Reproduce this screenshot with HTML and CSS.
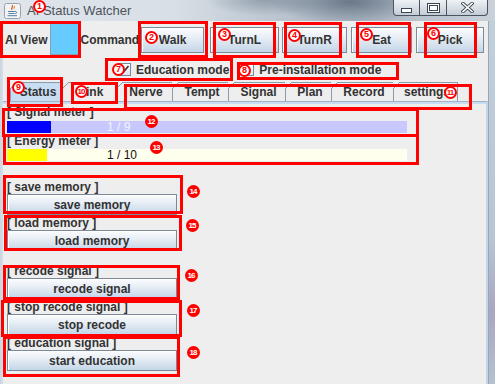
FILE: index.html
```html
<!DOCTYPE html>
<html>
<head>
<meta charset="utf-8">
<title>AI Status Watcher</title>
<link rel="stylesheet" href="styles.css">
</head>
<body>
<div class="window">
  <div class="titlebar">
    <svg class="app-icon" viewBox="0 0 17 16" width="17" height="16">
      <rect x="0.5" y="0.5" width="16" height="15" rx="2" fill="#f1f3f5" stroke="#9aa3ad"/>
      <path d="M8 2.2c2.2 1.6-1.6 2.6 0 4.6" stroke="#e0601a" stroke-width="1.3" fill="none"/>
      <path d="M10.2 3.2c1 1-1 1.6 0 2.6" stroke="#e0601a" stroke-width="1" fill="none"/>
      <path d="M4 8.5h7M4.5 10.5h6M3.5 12.7h9.5" stroke="#557ea3" stroke-width="1" fill="none"/>
      <path d="M11 8.3c2.2 0 2.2 2.3 0 2.3" stroke="#557ea3" stroke-width="1" fill="none"/>
    </svg>
    <span class="title">AI Status Watcher</span>
    <div class="winbtns">
      <div class="wb wb-min"><span class="g-min"></span></div>
      <div class="wb wb-max"><span class="g-max"></span></div>
      <div class="wb wb-close">
        <svg width="13" height="11" viewBox="0 0 13 11"><path d="M2 1.5l9 8M11 1.5l-9 8" stroke="#3c4652" stroke-width="3.4" stroke-linecap="square"/><path d="M2 1.5l9 8M11 1.5l-9 8" stroke="#ffffff" stroke-width="1.6" stroke-linecap="square"/></svg>
      </div>
    </div>
  </div>
  <div class="body">
    <div class="frame-left"></div>
    <div class="content">
      <div class="toolbar">
        <span class="lbl">AI View</span>
        <div class="view"></div>
        <span class="lbl cmd">Command</span>
        <button class="btn c-walk">Walk</button>
        <button class="btn c-turnl">TurnL</button>
        <button class="btn c-turnr">TurnR</button>
        <button class="btn c-eat">Eat</button>
        <button class="btn c-pick">Pick</button>
      </div>
      <div class="modes">
        <label class="chk"><span class="cb"><svg width="11" height="11" viewBox="0 0 11 11"><path d="M2 5.5l2.5 2.5L9.5 2" stroke="#333" stroke-width="1.6" fill="none"/></svg></span>Education mode</label>
        <label class="chk chk2"><span class="cb"></span>Pre-installation mode</label>
      </div>
      <div class="tabs">
        <div class="tab sel t-status">Status</div>
        <div class="tab t-link">Link</div>
        <div class="tab t-nerve">Nerve</div>
        <div class="tab t-tempt">Tempt</div>
        <div class="tab t-signal">Signal</div>
        <div class="tab t-plan">Plan</div>
        <div class="tab t-record">Record</div>
        <div class="tab t-settings">settings</div>
      </div>
      <div class="panel">
        <div class="meter">
          <div class="mlabel">[ Signal meter ]</div>
          <div class="bar bar-signal"><div class="fill fill-signal"></div><span class="btext light">1 / 9</span></div>
        </div>
        <div class="meter">
          <div class="mlabel">[ Energy meter ]</div>
          <div class="bar bar-energy"><div class="fill fill-energy"></div><span class="btext">1 / 10</span></div>
        </div>
        <div class="groups first">
          <div class="grp"><div class="glabel">[ save memory ]</div><button class="btn wide">save memory</button></div>
          <div class="grp"><div class="glabel">[ load memory ]</div><button class="btn wide">load memory</button></div>
        </div>
        <div class="groups second">
          <div class="grp"><div class="glabel">[ recode signal ]</div><button class="btn wide">recode signal</button></div>
          <div class="grp"><div class="glabel">[ stop recode signal ]</div><button class="btn wide">stop recode</button></div>
          <div class="grp"><div class="glabel">[ education signal ]</div><button class="btn wide">start education</button></div>
        </div>
      </div>
    </div>
    <div class="frame-right"></div>
  </div>

  <div class="notes">
    <div class="rb r1"></div><div class="rb r2"></div><div class="rb r3"></div>
    <div class="rb r4"></div><div class="rb r5"></div><div class="rb r6"></div>
    <div class="rb r7"></div><div class="rb r8"></div><div class="rb r9"></div>
    <div class="rb r10"></div><div class="rb r11"></div><div class="rb r12"></div>
    <div class="rb r13"></div><div class="rb r14"></div><div class="rb r15"></div>
    <div class="rb r16"></div><div class="rb r17"></div><div class="rb r18"></div>

    <span class="num n1">1</span><span class="num n2">2</span><span class="num n3">3</span>
    <span class="num n4">4</span><span class="num n5">5</span><span class="num n6">6</span>
    <span class="num n7">7</span><span class="num n8">8</span><span class="num n9">9</span>
    <span class="num two n10">10</span><span class="num two n11">11</span>
    <span class="num two fill n12">12</span><span class="num two fill n13">13</span>
    <span class="num two fill n14">14</span><span class="num two fill n15">15</span>
    <span class="num two fill n16">16</span><span class="num two fill n17">17</span>
    <span class="num two fill n18">18</span>
  </div>
</div>
</body>
</html>
```

FILE: styles.css
```css
* { box-sizing: border-box; }
html, body { margin: 0; padding: 0; }
body {
  width: 495px;
  height: 384px;
  overflow: hidden;
  font-family: "Liberation Sans", Arial, sans-serif;
  background: #eeeeee;
}
.window {
  position: relative;
  width: 495px;
  height: 384px;
  display: flex;
  flex-direction: column;
  background: #eeeeee;
}

/* title bar */
.titlebar {
  flex: none;
  height: 21px;
  display: flex;
  align-items: flex-start;
  background:
    radial-gradient(ellipse 60px 16px at 265px 0px, rgba(95,110,128,0.45), rgba(95,110,128,0) 100%),
    radial-gradient(ellipse 80px 22px at 350px 2px, rgba(85,100,118,0.75), rgba(95,110,128,0) 100%),
    linear-gradient(90deg, #dfe5eb 0%, #d8dfe6 35%, #bcc6d0 55%, #aab5c1 72%, #b9c3cd 85%, #c9d2db 100%);
}
.app-icon { margin: 3px 0 0 4px; flex: none; }
.title {
  margin: 3px 0 0 6px;
  font-size: 13px;
  line-height: 16px;
  color: #4c535b;
}
.winbtns {
  margin-left: auto;
  margin-right: 7px;
  display: flex;
  height: 16px;
}
.wb {
  height: 16px;
  border: 1px solid #4a5460;
  border-top: none;
  background: linear-gradient(#eef2f5, #d9dfe6 50%, #c3ccd6);
  display: flex;
  align-items: center;
  justify-content: center;
}
.wb-min { width: 27px; border-radius: 0 0 0 4px; }
.wb-max { width: 27px; border-left: none; }
.wb-close { width: 41px; border-left: none; border-radius: 0 0 4px 0; }
.g-min {
  width: 11px; height: 5px; margin-top: 5px;
  background: #fff; border: 1px solid #3c4652;
}
.g-max {
  width: 13px; height: 10px;
  border: 1px solid #3c4652;
  background: #fff;
  box-shadow: inset 0 0 0 1px #fff, inset 0 0 0 2px #3c4652;
}

/* body */
.body { flex: 1; display: flex; min-height: 0; }
.frame-left { width: 3px; flex: none; background: linear-gradient(90deg, #c8d4e0, #d7e0e9); }
.frame-right {
  width: 7px; flex: none;
  border-left: 1px solid #9aa6b2;
  background: linear-gradient(#c1cfdd, #b6c6d6 60%, #a9a6c2 80%, #b4c2d2);
}
.content { flex: 1; display: flex; flex-direction: column; background: #eeeeee; min-width: 0; }

.lbl { font-weight: bold; font-size: 12px; color: #333333; }
.toolbar {
  height: 37px;
  flex: none;
  display: flex;
  align-items: center;
  padding-left: 2px;
}
.view {
  width: 28px; height: 31px;
  margin-left: 3px;
  background: #66ccff;
  border-left: 1px solid #8c9cac;
  border-bottom: 1px solid #8c9cac;
}
.cmd { margin-left: 2px; }

.btn {
  font-family: "Liberation Sans", Arial, sans-serif;
  font-weight: bold;
  font-size: 12px;
  color: #333333;
  border: 1px solid #7a8a99;
  background: linear-gradient(#fbfcfe 0%, #eaf0f6 35%, #d6e2ee 70%, #c2d5e8 100%);
  box-shadow: inset 1px 1px 0 #ffffff;
  padding: 0;
  margin: 0;
  display: flex;
  align-items: center;
  justify-content: center;
}
.toolbar .btn { height: 26px; }
.c-walk { width: 63px; margin-left: 2px; }
.c-turnl { width: 69px; margin-left: 6px; }
.c-turnr { width: 65px; margin-left: 3px; }
.c-eat { width: 61px; margin-left: 4px; }
.c-pick { width: 68px; margin-left: 4px; }

/* modes */
.modes {
  height: 23px;
  flex: none;
  display: flex;
  align-items: center;
  padding-left: 115px;
}
.chk {
  display: flex;
  align-items: center;
  font-weight: bold;
  font-size: 12px;
  color: #333333;
}
.chk2 { margin-left: 12px; }
.cb {
  width: 13px; height: 13px;
  margin-right: 5px;
  border: 1px solid #7a8a99;
  background: linear-gradient(#ffffff, #dae5f0);
  display: flex;
  align-items: center;
  justify-content: center;
}

/* tabs */
.tabs {
  height: 20px;
  flex: none;
  display: flex;
  padding: 1px 0 0 7px;
}
.tab {
  position: relative;
  height: 19px;
  border-top: 1px solid #8a9bad;
  border-left: 1px solid #8a9bad;
  font-weight: bold;
  font-size: 12px;
  color: #333333;
  display: flex;
  align-items: center;
  justify-content: center;
  padding-left: 3px;
}
.tab::before {
  content: "";
  position: absolute;
  top: -1px;
  left: -1px;
  width: 7px;
  height: 7px;
  background: linear-gradient(to bottom right, #eeeeee 0, #eeeeee calc(50% - 0.6px), #8a9bad calc(50% - 0.6px), #8a9bad calc(50% + 0.6px), transparent calc(50% + 0.6px));
}
.tab.sel { background: #c8ddf2; }
.t-status { width: 52px; }
.t-link { width: 54px; }
.t-nerve { width: 56px; }
.t-tempt { width: 56px; }
.t-signal { width: 57px; }
.t-plan { width: 46px; }
.t-record { width: 62px; }
.t-settings { width: 65px; border-right: 1px solid #8a9bad; }

/* panel */
.panel {
  flex: 1;
  border-top: 1px solid #9fb2c6;
  border-right: 2px solid #c2d4e6;
  box-shadow: inset 0 2px 0 #c8ddf2;
  padding: 3px 0 0 4px;
}
.mlabel {
  font-weight: bold;
  font-size: 12px;
  line-height: 15px;
  color: #333333;
}
.meter + .meter { margin-top: 1px; }
.bar {
  width: 400px;
  height: 12px;
  margin-top: 1px;
  display: grid;
}
.meter + .meter .bar { margin-top: 0; }
.bar > * { grid-area: 1 / 1; }
.bar-signal { background: #c8c8ff; }
.bar-energy { background: #ffffee; }
.fill-signal { width: 44px; background: #0000ff; }
.fill-energy { width: 40px; background: #ffff00; }
.btext {
  padding-left: 100px;
  font-size: 12px;
  line-height: 12px;
  color: #111111;
}
.btext.light { color: #f4f4ff; }

.groups.first { margin-top: 20px; }
.groups.second { margin-top: 14px; }
.grp { margin-bottom: 2px; }
.glabel {
  font-weight: bold;
  font-size: 12px;
  line-height: 13px;
  color: #333333;
}
.btn.wide { width: 170px; height: 21px; }

/* annotation overlay */
.notes { position: absolute; left: 0; top: 0; width: 495px; height: 384px; pointer-events: none; }
.rb { position: absolute; border: 3px solid #ff0000; }
.r1 { left: 0; top: 21px; width: 81px; height: 37px; }
.r2 { left: 138px; top: 21px; width: 70px; height: 37px; }
.r3 { left: 213px; top: 22px; width: 63px; height: 36px; }
.r4 { left: 284px; top: 22px; width: 58px; height: 36px; }
.r5 { left: 356px; top: 22px; width: 55px; height: 36px; }
.r6 { left: 424px; top: 22px; width: 53px; height: 36px; }
.r7 { left: 105px; top: 58px; width: 128px; height: 23px; }
.r8 { left: 237px; top: 62px; width: 162px; height: 18px; }
.r9 { left: 7px; top: 77px; width: 56px; height: 30px; }
.r10 { left: 71px; top: 82px; width: 47px; height: 22px; }
.r11 { left: 124px; top: 84px; width: 348px; height: 26px; }
.r12 { left: 2px; top: 108px; width: 417px; height: 29px; }
.r13 { left: 3px; top: 134px; width: 416px; height: 31px; }
.r14 { left: 3px; top: 175px; width: 180px; height: 39px; }
.r15 { left: 4px; top: 215px; width: 178px; height: 36px; }
.r16 { left: 3px; top: 265px; width: 177px; height: 35px; }
.r17 { left: 1px; top: 300px; width: 181px; height: 37px; }
.r18 { left: 3px; top: 336px; width: 177px; height: 41px; }

.num {
  position: absolute;
  width: 13px;
  height: 13px;
  border-radius: 50%;
  border: 2px solid #ff0000;
  background: #ffffff;
  color: #ff0000;
  font-family: "Liberation Sans", Arial, sans-serif;
  font-weight: bold;
  font-size: 9px;
  line-height: 9px;
  display: flex;
  align-items: center;
  justify-content: center;
}
.num.two { font-size: 8px; letter-spacing: -1px; padding-right: 1px; }
.num.fill { background: #ff0000; color: #ffffff; border-color: #ff0000; }
.n1 { left: 33px; top: 0; }
.n2 { left: 145px; top: 31px; }
.n3 { left: 218px; top: 28px; }
.n4 { left: 288px; top: 29px; }
.n5 { left: 360px; top: 28px; }
.n6 { left: 427px; top: 27px; }
.n7 { left: 112px; top: 63px; }
.n8 { left: 238px; top: 64px; }
.n9 { left: 12px; top: 81px; }
.n10 { left: 75px; top: 85px; }
.n11 { left: 444px; top: 86px; }
.n12 { left: 145px; top: 115px; }
.n13 { left: 150px; top: 141px; }
.n14 { left: 187px; top: 185px; }
.n15 { left: 186px; top: 219px; }
.n16 { left: 185px; top: 269px; }
.n17 { left: 187px; top: 304px; }
.n18 { left: 187px; top: 346px; }
```
